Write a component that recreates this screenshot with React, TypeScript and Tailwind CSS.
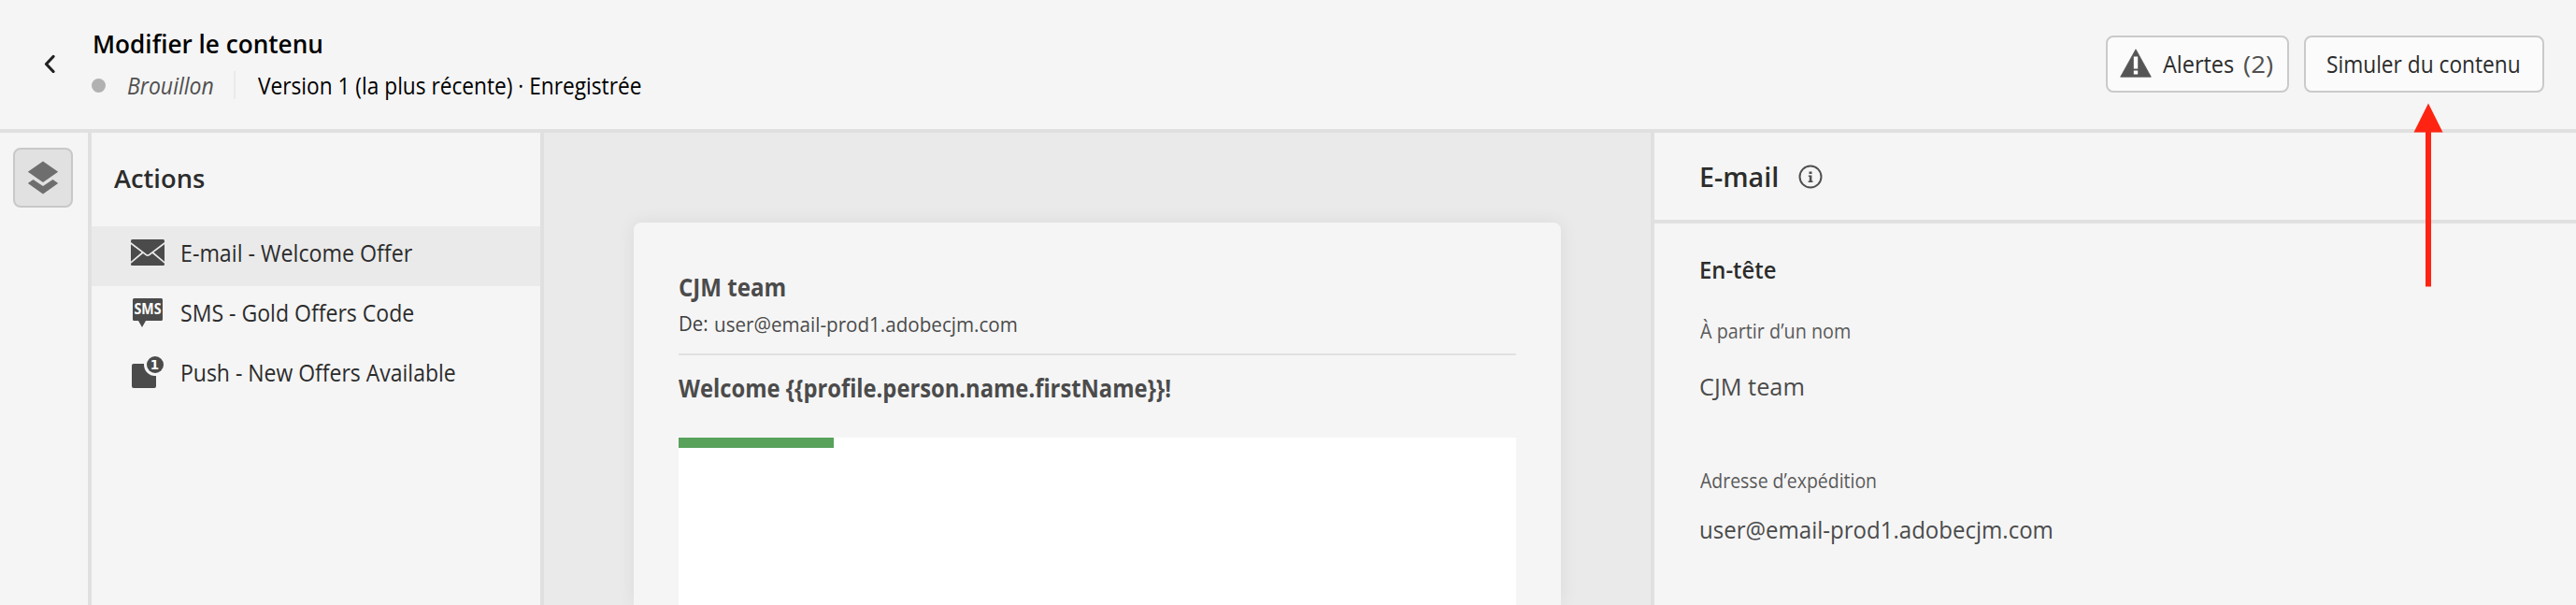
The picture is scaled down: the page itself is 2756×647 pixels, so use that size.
import { useLayoutEffect, useRef, useState } from "react";

type LabelProps = { text: string; width: number; className?: string };

// Single line of text, condensed horizontally so that it fills `width`.
function Label({ text, width, className = "" }: LabelProps) {
  const ref = useRef<HTMLSpanElement>(null);
  const [scale, setScale] = useState(1);
  useLayoutEffect(() => {
    if (ref.current) setScale(width / ref.current.offsetWidth);
  }, [width, text]);
  return (
    <div className={`h-8 shrink-0 leading-8 whitespace-nowrap ${className}`} style={{ width }}>
      <span ref={ref} className="inline-block origin-left" style={{ transform: `scaleX(${scale})` }}>
        {text}
      </span>
    </div>
  );
}

function LayersIcon() {
  return (
    <svg className="h-[36px] w-[34px]" viewBox="0 0 34 36" fill="#6e6e6e">
      <path d="M17 0.5 33.200 11.700 17 23 0.800 11.700Z" />
      <path d="M6.500 19.900 17 27 27.500 19.900 33.200 24 17 35.500 0.800 24Z" />
    </svg>
  );
}

function EnvelopeIcon() {
  return (
    <svg className="h-[28px] w-[36px]" viewBox="0 0 36 28">
      <rect width="36" height="28" rx="1.5" fill="#4b4b4b" />
      <path d="M-0.500 3.800 15.200 15.600Q18 18.600 20.800 15.600L36.500 3.800M-0.500 25.200 12.800 14M36.500 25.200 23.200 14" fill="none" stroke="#eaeaea" strokeWidth="1.7" />
    </svg>
  );
}

function SmsIcon() {
  return (
    <svg className="h-[31px] w-[32px] overflow-visible" viewBox="0 0 32 31">
      <path d="M1.500 0H30.500Q32 0 32 1.500V22.500Q32 24 30.500 24H14L10 31 6 24H1.500Q0 24 0 22.500V1.500Q0 0 1.500 0Z" fill="#4b4b4b" />
      <text x="1.500" y="17" textLength="29" lengthAdjust="spacingAndGlyphs" fill="#fff" fontFamily="Open Sans, sans-serif" fontWeight="700" fontSize="16">
        SMS
      </text>
    </svg>
  );
}

function PushIcon() {
  return (
    <svg className="h-[34px] w-[34px]" viewBox="0 0 34 34">
      <rect x="0" y="8" width="26" height="26" rx="2" fill="#4b4b4b" />
      <circle cx="25" cy="9" r="12" fill="#f5f5f5" />
      <circle cx="25" cy="9" r="9" fill="#4b4b4b" />
      <text x="24.500" y="14" textAnchor="middle" fill="#fff" fontFamily="DejaVu Sans, sans-serif" fontWeight="700" fontSize="13.500">
        1
      </text>
    </svg>
  );
}

const actions = [
  { label: "E-mail - Welcome Offer", width: 248, Icon: EnvelopeIcon, selected: true },
  { label: "SMS - Gold Offers Code", width: 250, Icon: SmsIcon, selected: false },
  { label: "Push - New Offers Available", width: 295, Icon: PushIcon, selected: false },
];

function Header() {
  return (
    <header className="flex h-[142px] shrink-0 border-b-4 border-[#e0e0e0]">
      <div className="flex w-[98px] items-start pt-[58px] pl-[46px]">
        <svg className="h-[20px] w-[14px]" viewBox="0 0 14 20" fill="none" stroke="#222" strokeWidth="3.200" strokeLinecap="round" strokeLinejoin="round">
          <path d="M11 2.500 3.500 10.500 11 18.500" />
        </svg>
      </div>
      <div className="flex flex-1 flex-col gap-[12px] pt-[31px]">
        <Label text="Modifier le contenu" width={247} className="ml-px text-[27px] font-semibold text-black" />
        <div className="flex items-center">
          <span className="size-[15px] rounded-full bg-[#b1b1b1]" />
          <Label text="Brouillon" width={93} className="ml-[23px] text-[25px] text-[#505050] italic" />
          <span className="ml-[21px] h-[30px] w-[2px] bg-[#eaeaea]" />
          <Label text="Version 1 (la plus récente) · Enregistrée" width={410} className="ml-[24px] text-[25px] text-black" />
        </div>
      </div>
      <div className="flex items-start gap-4 pt-[38px] pr-[34px]">
        <button className="flex h-[61px] w-[196px] items-center rounded-lg border-2 border-[#cacaca] bg-[#fbfbfb] pb-[2px] pl-[13px]">
          <svg className="h-[31px] w-[34px]" viewBox="0 0 34 31">
            <path d="M17 0.800 33.300 30.200H0.700Z" fill="#555" strokeLinejoin="round" stroke="#555" strokeWidth="0.800" />
            <path d="M14.800 8.500H19.200V21.500H14.800ZM14.800 23.500H19.200V27.500H14.800Z" fill="#fff" />
          </svg>
          <Label text="Alertes" width={76} className="ml-[12px] text-left text-[25px] text-[#2c2c2c]" />
          <Label text="(2)" width={32} className="ml-[10px] text-left text-[25px] text-[#505050]" />
        </button>
        <button className="flex h-[61px] w-[257px] items-center rounded-lg border-2 border-[#cacaca] bg-[#fbfbfb] pb-[2px] pl-[22px]">
          <Label text="Simuler du contenu" width={208} className="text-left text-[25px] text-[#2c2c2c]" />
        </button>
      </div>
    </header>
  );
}

function ActionsPanel() {
  return (
    <section className="w-[484px] shrink-0 border-r-4 border-[#e0e0e0] pt-[33px]">
      <Label text="Actions" width={97} className="mb-[35px] ml-[24px] text-[27px] font-semibold text-[#2c2c2c]" />
      <ul>
        {actions.map(({ label, width, Icon, selected }) => (
          <li key={label} className={`flex h-16 items-center pb-2 pl-[42px] ${selected ? "bg-[#eaeaea]" : ""}`}>
            <span className="flex w-9 justify-center">
              <Icon />
            </span>
            <Label text={label} width={width} className="ml-[17px] text-[25px] text-[#2c2c2c]" />
          </li>
        ))}
      </ul>
    </section>
  );
}

function Preview() {
  return (
    <main className="flex w-[1184px] shrink-0 justify-start bg-[#eaeaea] pt-24 pl-[96px]">
      <article className="w-[992px] rounded-t-lg bg-[#f5f5f5] px-12 pt-[53px] text-[#4b4b4b] shadow-[0_0_20px_rgba(0,0,0,0.07)]">
        <Label text="CJM team" width={115} className="text-[26px] font-bold" />
        <div className="mt-[7px] flex">
          <Label text="De:" width={32} className="text-[21px] text-[#3c3c3c]" />
          <Label text="user@email-prod1.adobecjm.com" width={325} className="ml-[6px] text-[22px]" />
        </div>
        <hr className="mt-[16px] h-[2px] border-0 bg-[#e1e1e1]" />
        <Label text="Welcome {{profile.person.name.firstName}}!" width={527} className="mt-[19px] text-[26px] font-bold" />
        <div className="mt-[37px] h-[179px] bg-white">
          <div className="h-[11px] w-[166px] bg-[#58a25c]" />
        </div>
      </article>
    </main>
  );
}

function Properties() {
  return (
    <aside className="flex-1 border-l-4 border-[#e0e0e0] text-[#2c2c2c]">
      <div className="flex h-[97px] items-center border-b-4 border-[#e0e0e0] pl-[48px]">
        <Label text="E-mail" width={85} className="text-[28px] font-semibold" />
        <svg className="ml-[21px] size-[26px]" viewBox="0 0 26 26">
          <circle cx="13" cy="13" r="11.500" fill="none" stroke="#505050" strokeWidth="2" />
          <path d="M11.500 7.500H14.500V10H11.500ZM10.800 11.500H14.400V17.500H15.500V19H10.600V17.500H11.800V13H10.800Z" fill="#505050" />
        </svg>
      </div>
      <div className="pt-[33px] pl-[48px]">
        <Label text="En-tête" width={82} className="text-[25px] font-semibold" />
        <Label text="À partir d’un nom" width={161} className="mt-[34px] ml-px text-[21px] text-[#5a5a5a]" />
        <Label text="CJM team" width={113} className="mt-[27px] text-[26px] text-[#4b4b4b]" />
        <Label text="Adresse d’expédition" width={189} className="mt-[69px] ml-px text-[21px] text-[#5a5a5a]" />
        <Label text="user@email-prod1.adobecjm.com" width={379} className="mt-5 text-[26px] text-[#4b4b4b]" />
      </div>
    </aside>
  );
}

export default function App() {
  return (
    <div className="relative flex h-[647px] w-[2756px] flex-col overflow-hidden bg-[#f5f5f5] font-['Open_Sans',sans-serif]">
      <Header />
      <div className="flex flex-1">
        <nav className="w-[98px] shrink-0 border-r-4 border-[#e0e0e0] pt-4 pl-[14px]">
          <button className="flex size-16 items-center justify-center rounded-lg border-2 border-[#c8c8c8] bg-[#e1e1e1]">
            <LayersIcon />
          </button>
        </nav>
        <ActionsPanel />
        <Preview />
        <Properties />
      </div>
      <svg className="absolute top-[110px] left-[2582px] h-[197px] w-[32px]" viewBox="0 0 32 197" fill="#ff2412">
        <path d="M16 0.500 31.500 31.500H19V196.500H13V31.500H0.500Z" />
      </svg>
    </div>
  );
}
